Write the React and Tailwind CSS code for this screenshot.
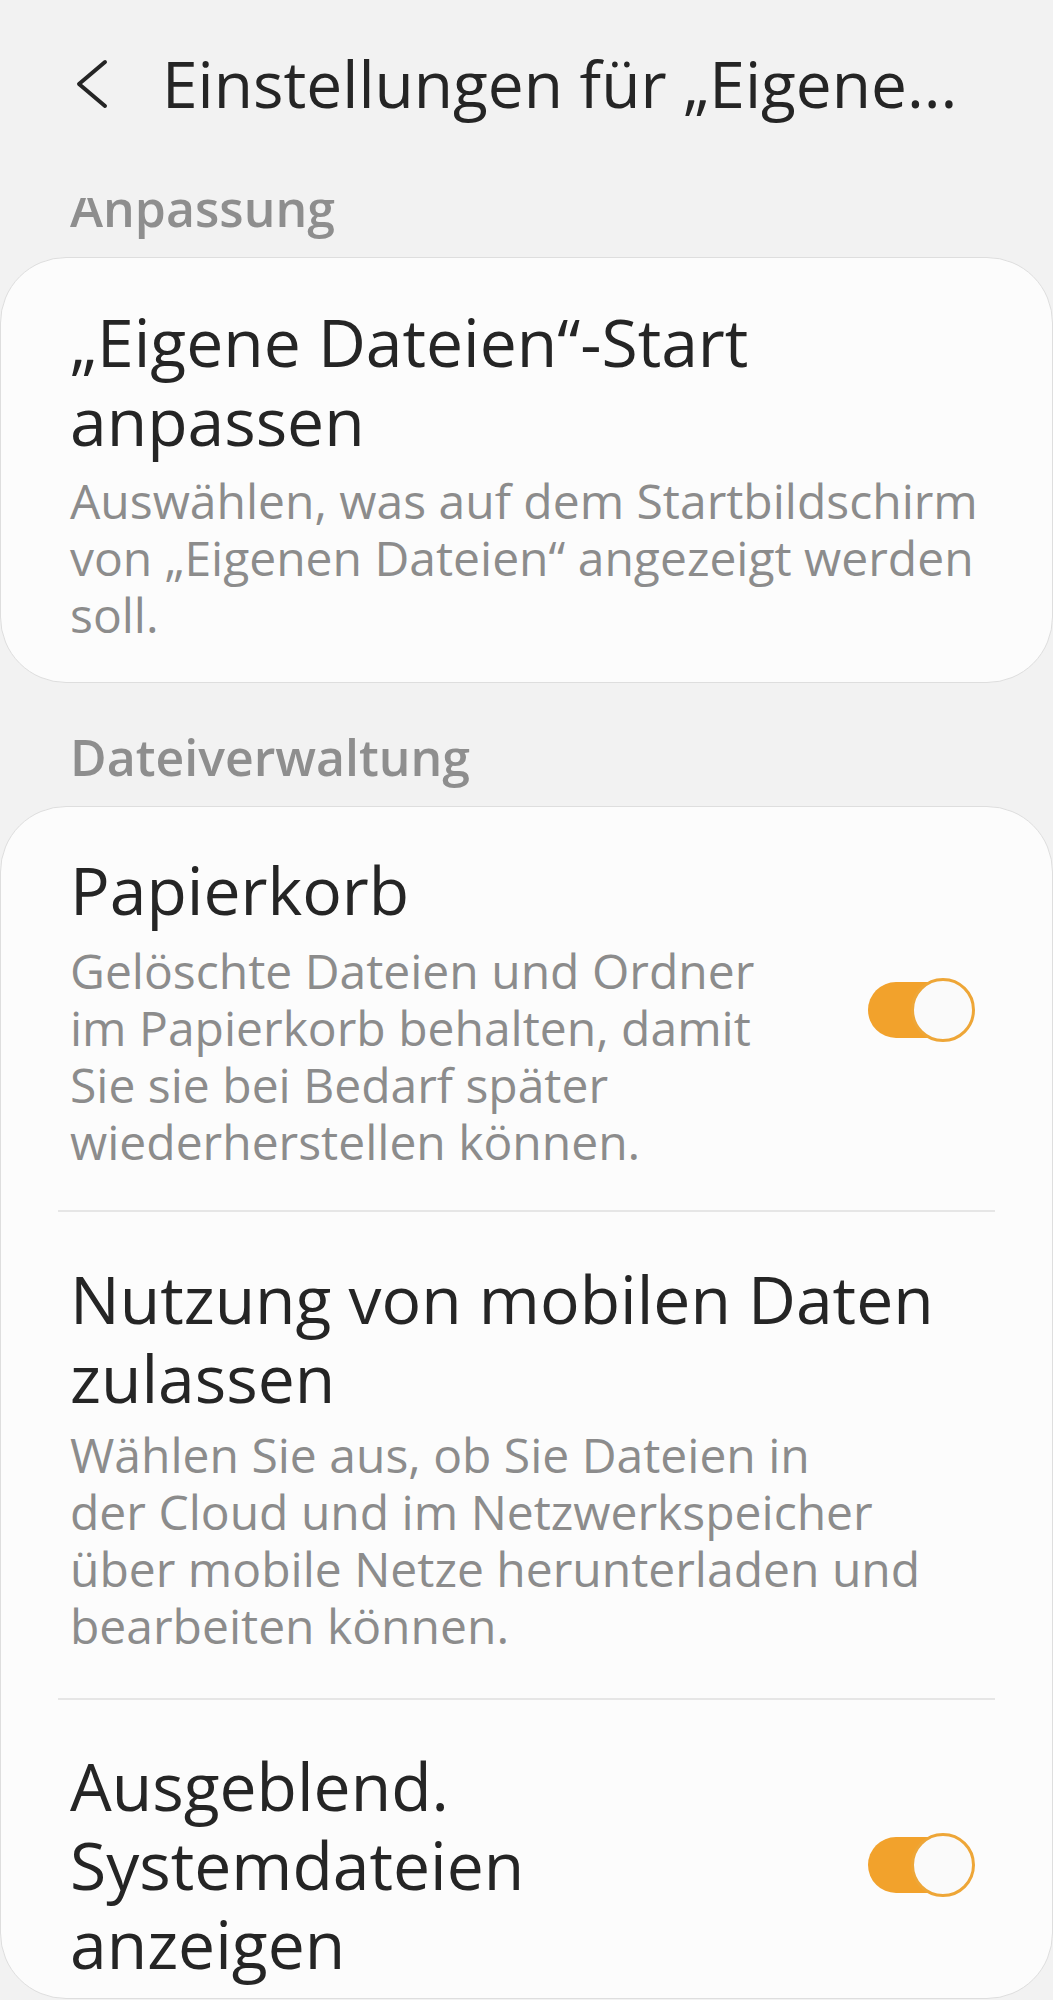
const FONT = "font-['Open_Sans',sans-serif]";

function Toggle() {
  return (
    <div className="relative w-[107px] h-[64px] shrink-0">
      <div className="absolute left-0 top-[4px] w-[90px] h-[56px] rounded-full bg-[#f2a22c]" />
      <div className="absolute right-0 top-0 w-[64px] h-[64px] rounded-full border-[3px] border-[#eea637] bg-[#fafafa]" />
    </div>
  );
}

function Lines({ lines }) {
  return lines.map((line, i) => (
    <span key={i} className="block whitespace-nowrap">
      {line}
    </span>
  ));
}

// one settings row inside a card
function Item({ title, desc, toggle, className }) {
  return (
    <div className={`flex items-center pl-[12px] pr-[20px] ${className}`}>
      <div className="flex-1">
        <div className="text-[66px] leading-[79px] text-[#252525]">
          <Lines lines={title} />
        </div>
        {desc && (
          <div className="text-[48px] leading-[57px] text-[#8c8c8c]">
            <Lines lines={desc} />
          </div>
        )}
      </div>
      {toggle && <Toggle />}
    </div>
  );
}

function SectionLabel({ children, className }) {
  return (
    <div className={`pl-[70px] text-[50px] leading-[68px] font-semibold text-[#8e8e8e] ${className}`}>
      {children}
    </div>
  );
}

export default function App() {
  return (
    <div className={`w-[1053px] h-[2000px] bg-[#f2f2f2] overflow-hidden ${FONT}`}>
      {/* Top bar */}
      <div className="h-[198px] pt-[40px]">
        <div className="flex items-center h-[88px]">
          <div className="w-[162px] pl-[76px]">
            <svg width="32" height="50" viewBox="0 0 32 50" fill="none">
              <path d="M29 3 L3 25 L29 47" stroke="#252525" strokeWidth="4" strokeLinecap="round" strokeLinejoin="round" />
            </svg>
          </div>
          <h1 className="text-[64px] leading-[88px] text-[#252525] whitespace-nowrap">
            Einstellungen für „Eigene...
          </h1>
        </div>
      </div>

      {/* Scrolled content, clipped under the top bar */}
      <div className="h-[1802px] overflow-hidden">
        <SectionLabel className="-mt-[24px]">Anpassung</SectionLabel>

        <div className="mt-[15px] rounded-[66px] border border-[#dedede] bg-[#fcfcfc] px-[57px] pt-[44px] pb-[39px]">
          <div className="pl-[12px]">
            <div className="text-[66px] leading-[79px] text-[#252525]">
              <Lines lines={["„Eigene Dateien“-Start", "anpassen"]} />
            </div>
            <div className="mt-[12px] text-[48px] leading-[57px] text-[#8c8c8c]">
              <Lines
                lines={[
                  "Auswählen, was auf dem Startbildschirm",
                  "von „Eigenen Dateien“ angezeigt werden",
                  "soll.",
                ]}
              />
            </div>
          </div>
        </div>

        <SectionLabel className="mt-[40px]">Dateiverwaltung</SectionLabel>

        <div className="mt-[15px] rounded-[66px] border border-[#dedede] bg-[#fcfcfc] px-[57px] pb-[15px]">
          <div className="flex items-center pl-[12px] pr-[20px] pt-[43px] pb-[40px]">
            <div className="flex-1">
              <div className="text-[66px] leading-[79px] text-[#252525]">Papierkorb</div>
              <div className="mt-[13px] text-[48px] leading-[57px] text-[#8c8c8c]">
                <Lines
                  lines={[
                    "Gelöschte Dateien und Ordner",
                    "im Papierkorb behalten, damit",
                    "Sie sie bei Bedarf später",
                    "wiederherstellen können.",
                  ]}
                />
              </div>
            </div>
            <Toggle />
          </div>

          <div className="h-[2px] bg-[#e6e6e6]" />

          <div className="pl-[12px] pr-[20px] pt-[47px] pb-[44px]">
            <div className="text-[66px] leading-[79px] text-[#252525]">
              <Lines lines={["Nutzung von mobilen Daten", "zulassen"]} />
            </div>
            <div className="mt-[9px] text-[48px] leading-[57px] text-[#8c8c8c]">
              <Lines
                lines={[
                  "Wählen Sie aus, ob Sie Dateien in",
                  "der Cloud und im Netzwerkspeicher",
                  "über mobile Netze herunterladen und",
                  "bearbeiten können.",
                ]}
              />
            </div>
          </div>

          <div className="h-[2px] bg-[#e6e6e6]" />

          <Item
            className="pt-[46px]"
            title={["Ausgeblend.", "Systemdateien", "anzeigen"]}
            toggle
          />
        </div>
      </div>
    </div>
  );
}
